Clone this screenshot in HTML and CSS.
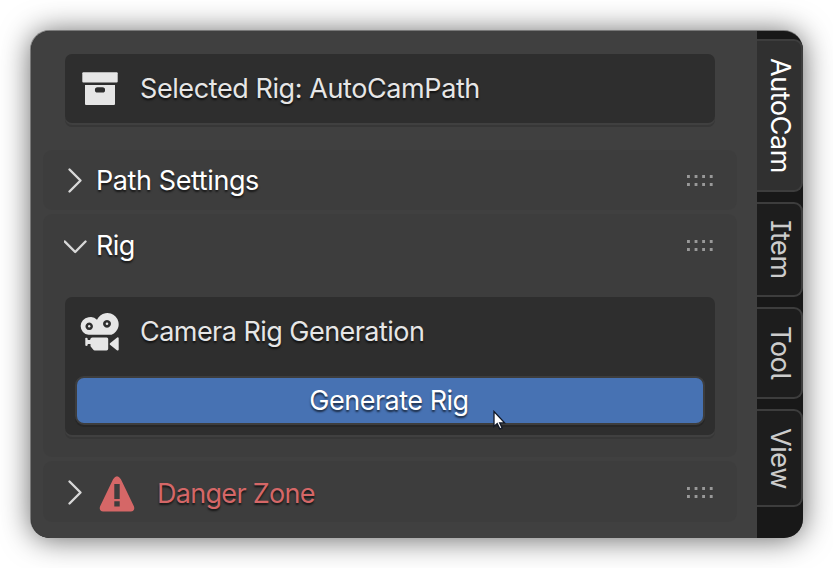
FILE: index.html
```html
<!DOCTYPE html>
<html lang="en">
<head>
<meta charset="utf-8">
<title>AutoCam</title>
<link rel="stylesheet" href="styles.css">
</head>
<body>
<div class="window">
  <main class="region">
    <div class="box box-selected">
      <svg class="icon" width="40" height="40" viewBox="0 0 40 40" fill="#e6e6e6"><rect x="2.300" y="3.200" width="35.400" height="10.300" rx="1"/><path fill-rule="evenodd" d="M5 16h30v19q0 1-1 1H6q-1 0-1-1zM17.500 18.300a2.600 2.600 0 0 0 0 5.200h5a2.600 2.600 0 0 0 0-5.200z"/></svg>
      <span class="label label-selected">Selected Rig: AutoCamPath</span>
    </div>

    <section class="panel panel-path">
      <header class="head">
        <svg class="arrow" width="24" height="28" viewBox="0 0 24 28"><path d="M5.500 2.500 16.500 13.500 5.500 24.500"/></svg>
        <span class="title title-path">Path Settings</span>
        <span class="grip"></span>
      </header>
    </section>

    <section class="panel panel-rig">
      <header class="head">
        <svg class="arrow" width="24" height="28" viewBox="0 0 24 28"><path d="M.800 9.500 11.200 20 21.500 9.500"/></svg>
        <span class="title title-rig">Rig</span>
        <span class="grip"></span>
      </header>
      <div class="box box-generate">
        <div class="row">
          <svg class="icon" width="40" height="42" viewBox="0 0 40 42" fill="#e6e6e6"><path fill-rule="evenodd" d="M8.500 6.300a8.300 8.300 0 0 1 8.500 2.500A11.300 11.300 0 1 1 31.500 23.800H8.500A8.800 8.800 0 0 1 8.500 6.300zM9.200 11.600a3.700 3.700 0 1 0 .01 0zM27 8.900a3.900 3.900 0 1 0 .01 0z"/><circle cx="9.200" cy="15.300" r="1.200"/><circle cx="27" cy="12.800" r="1.300"/><path d="M5.300 27q1.800-1 2.400.8V29H10q.5-2.400 2.500-2.400h14.200q1.500 0 1.500 1.500v9.700q0 1.700-1.700 1.700H14.800q-1 0-1.700-.9l-2.600-3.300V33H7.700v1q-.6 1.500-2.400.6z"/><path d="M30 32.200l7.200-5.800q1.500-.3 1.500 1v11q0 1.300-1.500 1L30 33.700q-.7-.7 0-1.500z"/></svg>
          <span class="label label-camera">Camera Rig Generation</span>
        </div>
        <button class="action" type="button"><span>Generate Rig</span></button>
      </div>
    </section>

    <section class="panel panel-danger">
      <header class="head">
        <svg class="arrow" width="24" height="28" viewBox="0 0 24 28"><path d="M5.500 2.500 16.500 13.500 5.500 24.500"/></svg>
        <svg class="warning" width="38" height="38" viewBox="0 0 38 38"><path fill="#d56767" fill-rule="evenodd" d="M15.100 4.200q3.900-6 7.800 0L36 31.500q1.200 4.800-3.200 5H5.200Q.8 36.300 2 31.500zM16.300 9v15h5.400V9zM16.300 26.200v5.200h5.400v-5.200z"/></svg>
        <span class="title title-danger">Danger Zone</span>
        <span class="grip"></span>
      </header>
    </section>
  </main>

  <nav class="tabs">
    <div class="tab tab-autocam active"><span>AutoCam</span></div>
    <div class="tab tab-item"><span>Item</span></div>
    <div class="tab tab-tool"><span>Tool</span></div>
    <div class="tab tab-view"><span>View</span></div>
  </nav>
</div>
<svg class="cursor" width="14" height="21" viewBox="0 0 14 21"><path d="M1 1.500v15l3.200-2.900 2.600 5.300 2.300-1-2.400-5h4.900z" fill="#fff" stroke="#111827" stroke-width="1.300"/></svg>
</body>
</html>
```
FILE: styles.css
```css
* { box-sizing: border-box; }

body {
  margin: 0;
  width: 833px;
  height: 568px;
  overflow: hidden;
  padding: 31px 30px 30px 31px;
  background: #fff;
  font-family: Inter, sans-serif;
  font-size: 27px;
  line-height: 32px;
  color: #e6e6e6;
}

.window {
  display: flex;
  width: 772px;
  height: 507px;
  border-radius: 19px;
  background: #181818;
  overflow: hidden;
  box-shadow: -.5px -.5px 0 .5px rgba(80, 80, 80, .6), 0 1px 30px rgba(0, 0, 0, .62);
}

.region {
  width: 726px;
  padding: 23px 20px 0 12px;
  background: #404040;
}

.box {
  border-radius: 7px;
  background: #2e2e2e;
  box-shadow: 0 2px 0 #404040, 0 4px 0 #373737;
}

.box-selected {
  display: flex;
  align-items: center;
  height: 69px;
  margin: 0 22px 27px;
  padding-left: 15px;
}

.icon { flex: none; margin-right: 20px; }

.label, .title, .action { text-shadow: 0 2px 2px rgba(0, 0, 0, .65); white-space: nowrap; }
.label-selected { letter-spacing: -.41px; }
.label-camera { letter-spacing: -.54px; }
.title-path { letter-spacing: -.4px; }
.title-rig { letter-spacing: -.6px; }

.panel { border-radius: 9px; background: #3d3d3d; }
.panel-path { height: 60px; margin-bottom: 4px; }
.panel-rig { height: 243px; margin-bottom: 4px; padding-top: 1px; }
.panel-danger { height: 61px; padding-top: 1px; }

.head {
  display: flex;
  align-items: center;
  height: 61px;
  padding: 0 24px 0 21px;
}

.arrow { margin-right: 8px; flex: none; }
.arrow path {
  fill: none;
  stroke: #d8d8d8;
  stroke-width: 2.4;
  stroke-linecap: round;
  stroke-linejoin: round;
}

.title { color: #fff; }
.warning { margin: 2px 21px 0 2px; flex: none; }
.title-danger { color: #d56767; letter-spacing: -.7px; padding-top: 3px; }

.grip {
  width: 26px;
  height: 11px;
  margin-left: auto;
  background: linear-gradient(90deg, #999 3px, transparent 3px) 0 0 / 7.600px 3px repeat-x,
    linear-gradient(90deg, #999 3px, transparent 3px) 0 8px / 7.600px 3px repeat-x;
}

.box-generate {
  height: 138px;
  margin: 21px 22px 0;
  padding: 14px 10px 0;
}

.row { display: flex; align-items: center; height: 42px; padding-left: 5px; }

.action {
  display: block;
  width: 630px;
  height: 49px;
  margin-top: 23px;
  padding: 0 2px 0 0;
  border: 2px solid #3d3d3d;
  border-radius: 9px;
  background: #4772b3;
  box-shadow: 0 2px 0 #262626;
  font: inherit;
  letter-spacing: -.5px;
  color: #fff;
}

.tabs {
  display: flex;
  flex-direction: column;
  gap: 10px;
  width: 46px;
  padding-top: 8px;
}

.tab {
  display: flex;
  align-items: center;
  justify-content: center;
  padding-left: 2px;
  border: 2px solid #3d3d3d;
  border-left: 0;
  border-radius: 0 9px 9px 0;
  background: #1d1d1d;
  color: #ccc;
  writing-mode: vertical-rl;
  font-feature-settings: "ss02";
  letter-spacing: -.4px;
}
.active { background: #303030; color: #fff; }
.tab-autocam { height: 153px; }
.tab-item { height: 95px; }
.tab-tool { height: 92px; }
.tab-view { height: 98px; }

.cursor { position: absolute; left: 493px; top: 410px; }
```
